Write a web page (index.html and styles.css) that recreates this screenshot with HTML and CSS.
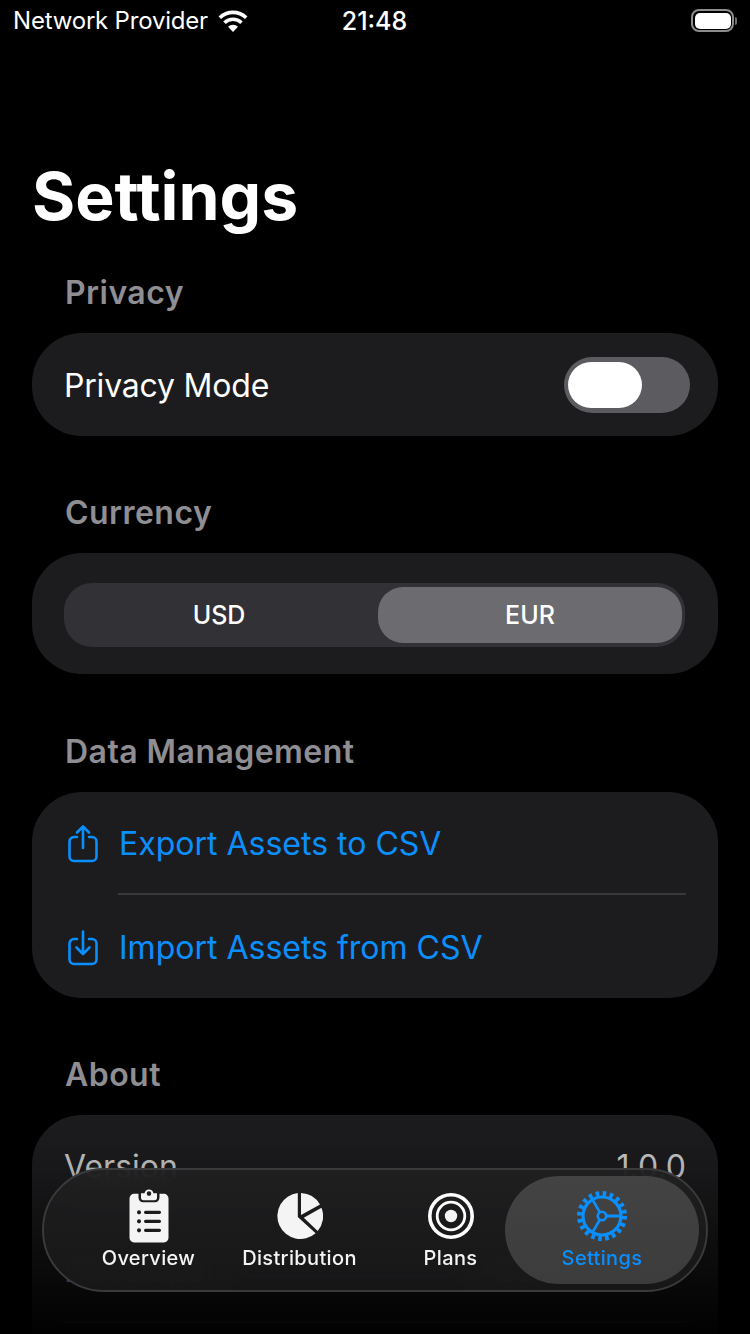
FILE: index.html
```html
<!DOCTYPE html>
<html lang="en">
<head>
  <meta charset="UTF-8" />
  <meta name="viewport" content="width=device-width, initial-scale=1.0" />
  <title>Settings</title>
  <link rel="stylesheet" href="styles.css">
</head>
<body>
  <div class="status-bar">
    <div class="carrier">
      <span>Network Provider</span>
      <svg class="wifi" viewBox="0 0 30 22" width="30" height="22">
        <path d="M15 22 L10 16.800 A7.200 7.200 0 0 1 20 16.800 Z" fill="#fff"/>
        <path d="M6.500 12.800 A12 12 0 0 1 23.500 12.800" fill="none" stroke="#fff" stroke-width="3.600"/>
        <path d="M1.800 7.800 A18.800 18.800 0 0 1 28.200 7.800" fill="none" stroke="#fff" stroke-width="3.600"/>
      </svg>
    </div>
    <div class="clock">21:48</div>
    <div class="battery-wrap">
      <div class="battery"><div class="battery-level"></div></div>
      <div class="battery-cap"></div>
    </div>
  </div>

  <main class="content">
    <h1>Settings</h1>

    <h2>Privacy</h2>
    <section class="card">
      <div class="row">
        <span class="label">Privacy Mode</span>
        <div class="toggle"><div class="knob"></div></div>
      </div>
    </section>

    <h2>Currency</h2>
    <section class="card currency-card">
      <div class="segmented">
        <div class="segment">USD</div>
        <div class="segment selected">EUR</div>
      </div>
    </section>

    <h2>Data Management</h2>
    <section class="card">
      <div class="row action first">
        <svg viewBox="0 0 30 38" width="30" height="38" fill="none" stroke="#0a8fff" stroke-width="2.600" stroke-linecap="round" stroke-linejoin="round">
          <path d="M9 12 H6 A4.500 4.500 0 0 0 1.500 16.500 V31.500 A4.500 4.500 0 0 0 6 36 H24 A4.500 4.500 0 0 0 28.500 31.500 V16.500 A4.500 4.500 0 0 0 24 12 H21"/>
          <path d="M15 23 V2 M9 7.500 L15 1.500 L21 7.500"/>
        </svg>
        <span>Export Assets to CSV</span>
      </div>
      <div class="divider"></div>
      <div class="row action">
        <svg viewBox="0 0 30 36" width="30" height="36" fill="none" stroke="#0a8fff" stroke-width="2.600" stroke-linecap="round" stroke-linejoin="round">
          <path d="M9 9 H6 A4.500 4.500 0 0 0 1.500 13.500 V29.500 A4.500 4.500 0 0 0 6 34 H24 A4.500 4.500 0 0 0 28.500 29.500 V13.500 A4.500 4.500 0 0 0 24 9 H21"/>
          <path d="M15 1.500 V24 M8.500 17.500 L15 24 L21.500 17.500"/>
        </svg>
        <span>Import Assets from CSV</span>
      </div>
    </section>

    <h2>About</h2>
    <section class="card about-card">
      <div class="row info">
        <span>Version</span>
        <span class="value">1.0.0</span>
      </div>
      <div class="info-line"></div>
      <div class="row info">
        <span>Developer</span>
        <span class="value">Asset Tracker</span>
      </div>
      <div class="info-line"></div>
    </section>
  </main>

  <div class="fade"></div>

  <nav class="tab-bar">
    <div class="tab">
      <div class="tab-icon">
        <svg viewBox="0 0 40 52" width="40" height="55" preserveAspectRatio="none">
          <path fill="#f4f4f4" d="M5 5.500 H9.500 V9 A4.500 4.500 0 0 0 14 13.500 H26 A4.500 4.500 0 0 0 30.500 9 V5.500 H35 A4.500 4.500 0 0 1 39.500 10 V47 A4.500 4.500 0 0 1 35 51.500 H5 A4.500 4.500 0 0 1 .5 47 V10 A4.500 4.500 0 0 1 5 5.500 Z"/>
          <path fill="#f4f4f4" fill-rule="evenodd" d="M12 5 H15.500 A4.600 4.600 0 0 1 24.500 5 H28 V9 A2.500 2.500 0 0 1 25.500 11.500 H14.500 A2.500 2.500 0 0 1 12 9 Z M20 3 A2.300 2.300 0 1 0 20 7.600 A2.300 2.300 0 1 0 20 3 Z"/>
          <g fill="#1c1c1c">
            <circle cx="10" cy="23" r="2"/><circle cx="10" cy="31.500" r="2"/><circle cx="10" cy="40" r="2"/>
            <rect x="15" y="21.500" width="17" height="3" rx="1.500"/>
            <rect x="15" y="30" width="17" height="3" rx="1.500"/>
            <rect x="15" y="38.500" width="17" height="3" rx="1.500"/>
          </g>
        </svg>
      </div>
      <span>Overview</span>
    </div>
    <div class="tab">
      <div class="tab-icon">
        <svg viewBox="0 0 46 46" width="46" height="46" fill="#f4f4f4">
          <path d="M20.800 .1 V24 L38.600 40.200 A23 23 0 1 1 20.800 .1 Z"/>
          <path d="M24 0 A23 23 0 0 1 43 11.500 L24 22 Z"/>
          <path d="M44.500 14.800 A23 23 0 0 1 40.700 38 L26.800 24.800 Z"/>
        </svg>
      </div>
      <span>Distribution</span>
    </div>
    <div class="tab">
      <div class="tab-icon">
        <svg viewBox="0 0 46 46" width="46" height="46" fill="none" stroke="#fff">
          <circle cx="23" cy="23" r="21.200" stroke-width="3.600"/>
          <circle cx="23" cy="23" r="13.800" stroke-width="2.800"/>
          <circle cx="23" cy="23" r="6.200" fill="#f4f4f4" stroke="none"/>
        </svg>
      </div>
      <span>Plans</span>
    </div>
    <div class="tab active">
      <div class="tab-icon">
        <svg viewBox="0 0 52 52" width="52" height="52" fill="none" stroke="#0a8fff">
          <circle cx="26" cy="26" r="19" stroke-width="3.200"/>
          <circle cx="26" cy="26" r="22.500" stroke-width="5" stroke-dasharray="3.600 3.470"/>
          <circle cx="26" cy="26" r="4.200" stroke-width="2.600"/>
          <path stroke-width="2.800" d="M30.200 26 H45 M23.900 22.400 L16.500 9.600 M23.900 29.600 L16.500 42.400"/>
        </svg>
      </div>
      <span>Settings</span>
    </div>
  </nav>
</body>
</html>
```

FILE: styles.css
```css
* {
  box-sizing: border-box;
}

body {
  margin: 0;
  width: 750px;
  height: 1334px;
  overflow: hidden;
  position: relative;
  background: #000;
  color: #fff;
  font-family: Inter, "Noto Sans", sans-serif;
}

.status-bar {
  height: 41px;
  padding: 0 13px 0 13px;
  display: grid;
  grid-template-columns: 1fr auto 1fr;
  align-items: center;
  font-size: 24px;
}

.carrier {
  display: flex;
  align-items: center;
  gap: 10px;
  letter-spacing: -0.2px;
}

.clock {
  font-size: 25px;
  font-weight: 500;
  margin-left: -1px;
}

.battery-wrap {
  justify-self: end;
  display: flex;
  align-items: center;
}

.battery {
  width: 43px;
  height: 23px;
  padding: 1.5px;
  border: 2px solid #8c8c8c;
  border-radius: 8px;
}

.battery-level {
  height: 100%;
  background: #fff;
  border-radius: 5px;
}

.battery-cap {
  width: 2px;
  height: 8px;
  margin-left: 1px;
  background: #6e6e6e;
  border-radius: 0 2px 2px 0;
}

.content {
  padding: 0 32px;
}

h1 {
  margin: 112px 0 34px 0;
  font-size: 66px;
  line-height: 86px;
  font-weight: 700;
}

h2 {
  margin: 0 0 20px 33px;
  font-size: 32px;
  line-height: 40px;
  font-weight: 600;
  letter-spacing: 0.45px;
  color: #8e8e93;
}

.card {
  background: #1c1c1e;
  border-radius: 50px;
  margin-bottom: 57px;
  font-size: 32px;
}

.row {
  height: 103px;
  padding: 0 28px 0 32px;
  display: flex;
  align-items: center;
  justify-content: space-between;
}

.label {
  padding-top: 1px;
  letter-spacing: -0.2px;
}

.toggle {
  width: 126px;
  height: 56px;
  padding: 5px 4px;
  background: #5c5c60;
  border-radius: 28px;
}

.knob {
  width: 74px;
  height: 46px;
  background: #fff;
  border-radius: 23px;
}

.currency-card {
  height: 121px;
  margin-bottom: 58px;
  padding: 30px 33px 0 32px;
}

.segmented {
  height: 64px;
  padding: 4px 3px 4px 0;
  display: grid;
  grid-template-columns: 310px 304px;
  gap: 4px;
  background: #323236;
  border-radius: 28px;
  font-size: 25px;
  font-weight: 500;
}

.segment {
  display: flex;
  align-items: center;
  justify-content: center;
  border-radius: 25px;
}

.segment.selected {
  background: #6c6c70;
}

.action {
  justify-content: flex-start;
  gap: 21px;
  padding-top: 2px;
  padding-left: 36px;
  color: #0a8fff;
}

.action.first {
  height: 101px;
}

.divider {
  height: 2px;
  margin: 0 32px 0 86px;
  background: #38383a;
}

.about-card {
  height: 218px;
  margin-bottom: 0;
  padding-bottom: 0;
  box-shadow: 0 100px 0 #1c1c1e;
}

.info {
  height: 102px;
  padding-top: 1px;
  padding-right: 32px;
  color: #ccc;
}

.value {
  color: #d0d0d5;
}

.info-line {
  height: 2px;
  margin: 0 32px;
  background: #38383a;
}

.fade {
  position: absolute;
  left: 0;
  right: 0;
  bottom: 0;
  height: 220px;
  background: linear-gradient(to bottom, rgba(0, 0, 0, 0), rgba(0, 0, 0, 0.15) 25%, rgba(0, 0, 0, 0.95));
}

.tab-bar {
  position: absolute;
  left: 42px;
  top: 1168px;
  width: 666px;
  height: 124px;
  padding: 6px 30px 6px 29px;
  display: grid;
  grid-template-columns: repeat(4, 151px);
  background: linear-gradient(to bottom, rgba(32, 32, 33, 0.9), rgba(24, 24, 25, 0.9));
  backdrop-filter: blur(14px);
  border: 2px solid #3a3a3c;
  border-radius: 62px;
}

.tab {
  display: flex;
  flex-direction: column;
  align-items: center;
  padding-top: 12px;
  font-size: 20px;
  line-height: 24px;
  font-weight: 500;
  letter-spacing: 0.35px;
  color: #f4f4f4;
}

.tab-icon {
  height: 55px;
  margin-bottom: 3px;
  display: flex;
  align-items: center;
}

.tab.active {
  margin: 0 -22px 0 -21px;
  color: #0a8fff;
  background: linear-gradient(to bottom, #434343, #3c3c3c);
  border-radius: 54px;
}
```
